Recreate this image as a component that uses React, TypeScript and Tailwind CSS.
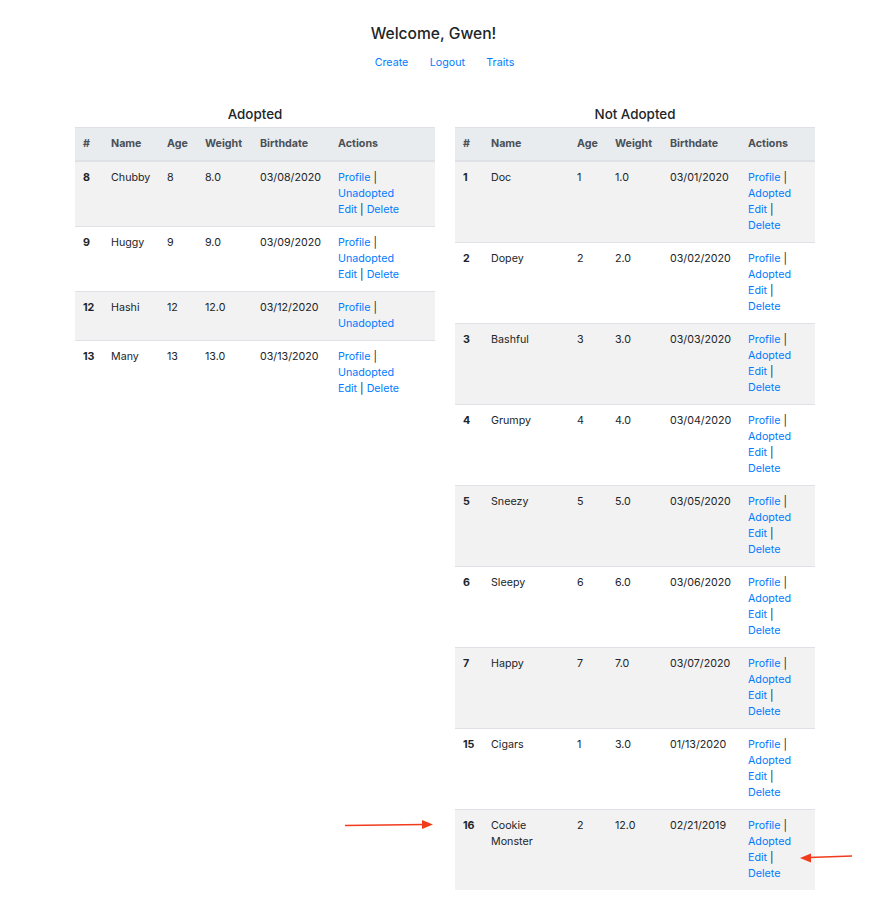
type Pet = {
  id: number;
  name: string[];
  age: number;
  weight: string;
  birth: string;
};

const adopted: Pet[] = [
  { id: 8, name: ["Chubby"], age: 8, weight: "8.0", birth: "03/08/2020" },
  { id: 9, name: ["Huggy"], age: 9, weight: "9.0", birth: "03/09/2020" },
  { id: 12, name: ["Hashi"], age: 12, weight: "12.0", birth: "03/12/2020" },
  { id: 13, name: ["Many"], age: 13, weight: "13.0", birth: "03/13/2020" },
];

const notAdopted: Pet[] = [
  { id: 1, name: ["Doc"], age: 1, weight: "1.0", birth: "03/01/2020" },
  { id: 2, name: ["Dopey"], age: 2, weight: "2.0", birth: "03/02/2020" },
  { id: 3, name: ["Bashful"], age: 3, weight: "3.0", birth: "03/03/2020" },
  { id: 4, name: ["Grumpy"], age: 4, weight: "4.0", birth: "03/04/2020" },
  { id: 5, name: ["Sneezy"], age: 5, weight: "5.0", birth: "03/05/2020" },
  { id: 6, name: ["Sleepy"], age: 6, weight: "6.0", birth: "03/06/2020" },
  { id: 7, name: ["Happy"], age: 7, weight: "7.0", birth: "03/07/2020" },
  { id: 15, name: ["Cigars"], age: 1, weight: "3.0", birth: "01/13/2020" },
  { id: 16, name: ["Cookie", "Monster"], age: 2, weight: "12.0", birth: "02/21/2019" },
];

const A = ({ children }: { children: React.ReactNode }) => (
  <a href="#" className="text-[#007bff]">
    {children}
  </a>
);

function PetTable({
  title,
  pets,
  widths,
  wide,
}: {
  title: string;
  pets: Pet[];
  widths: string[];
  wide: boolean;
}) {
  return (
    <div className="w-[360px]">
      <h5 className="text-center text-[13.4px] leading-[16px] font-medium mb-[5px]">{title}</h5>
      <table className="w-full table-fixed border-collapse text-[10.7px] leading-[16px]">
        <colgroup>
          {widths.map((w, i) => (
            <col key={i} className={w} />
          ))}
        </colgroup>
        <thead>
          <tr className="bg-[#e9ecef] text-[#495057] border-t border-[#dee2e6] border-b-2">
            {["#", "Name", "Age", "Weight", "Birthdate", "Actions"].map((h) => (
              <th key={h} className="text-left font-bold px-[8px] py-[8px]">
                {h}
              </th>
            ))}
          </tr>
        </thead>
        <tbody>
          {pets.map((p, i) => (
            <tr
              key={p.id}
              className={`border-t border-[#dee2e6] align-top ${i % 2 === 0 ? "bg-[#f2f2f2]" : "bg-white"}`}
            >
              <td className="px-[8px] py-[8px] font-bold">{p.id}</td>
              <td className="px-[8px] py-[8px]">
                {p.name.map((n) => (
                  <div key={n}>{n}</div>
                ))}
              </td>
              <td className="px-[8px] py-[8px]">{p.age}</td>
              <td className="px-[8px] py-[8px]">{p.weight}</td>
              <td className="px-[8px] py-[8px]">{p.birth}</td>
              <td className="px-[8px] py-[8px]">
                {wide ? (
                  <>
                    <div>
                      <A>Profile</A> |
                    </div>
                    <div>
                      <A>Unadopted</A>
                    </div>
                    {p.id !== 12 && (
                      <div>
                        <A>Edit</A> | <A>Delete</A>
                      </div>
                    )}
                  </>
                ) : (
                  <>
                    <div>
                      <A>Profile</A> |
                    </div>
                    <div>
                      <A>Adopted</A>
                    </div>
                    <div>
                      <A>Edit</A> |
                    </div>
                    <div>
                      <A>Delete</A>
                    </div>
                  </>
                )}
              </td>
            </tr>
          ))}
        </tbody>
      </table>
    </div>
  );
}

export default function App() {
  return (
    <div className="relative min-h-[912px] bg-white text-[#212529] font-['Inter',sans-serif]">
      <div className="flex flex-col items-center pt-[24px] pl-[6px]">
        <h4 className="text-[15.6px] leading-[20px] font-medium pr-[22px]">Welcome, Gwen!</h4>
        <nav className="flex text-[10.7px] leading-[16px] mt-[11px]">
          <a href="#" className="px-[10.7px] text-[#007bff]">Create</a>
          <a href="#" className="px-[10.7px] text-[#007bff]">Logout</a>
          <a href="#" className="px-[10.7px] text-[#007bff]">Traits</a>
        </nav>
      </div>

      <div className="ml-[75px] w-[740px] flex justify-between mt-[35px]">
        <PetTable
          title="Adopted"
          pets={adopted}
          wide
          widths={["w-[28px]", "w-[56px]", "w-[38px]", "w-[55px]", "w-[78px]", "w-[105px]"]}
        />
        <PetTable
          title="Not Adopted"
          pets={notAdopted}
          wide={false}
          widths={["w-[28px]", "w-[86px]", "w-[38px]", "w-[55px]", "w-[78px]", "w-[75px]"]}
        />
      </div>

      {/* annotation arrows */}
      <svg className="absolute left-[340px] top-[815px]" width="100" height="20" viewBox="0 0 100 20">
        <line x1="5" y1="10.5" x2="84" y2="9.5" stroke="#f23a1c" strokeWidth="1.6" />
        <polygon points="93,9.5 82,5 82,14" fill="#f23a1c" />
      </svg>
      <svg className="absolute left-[795px] top-[847px]" width="62" height="20" viewBox="0 0 62 20">
        <line x1="57" y1="9" x2="14" y2="10.5" stroke="#f23a1c" strokeWidth="1.6" />
        <polygon points="5,11 16,6.5 16,15.5" fill="#f23a1c" />
      </svg>
    </div>
  );
}
